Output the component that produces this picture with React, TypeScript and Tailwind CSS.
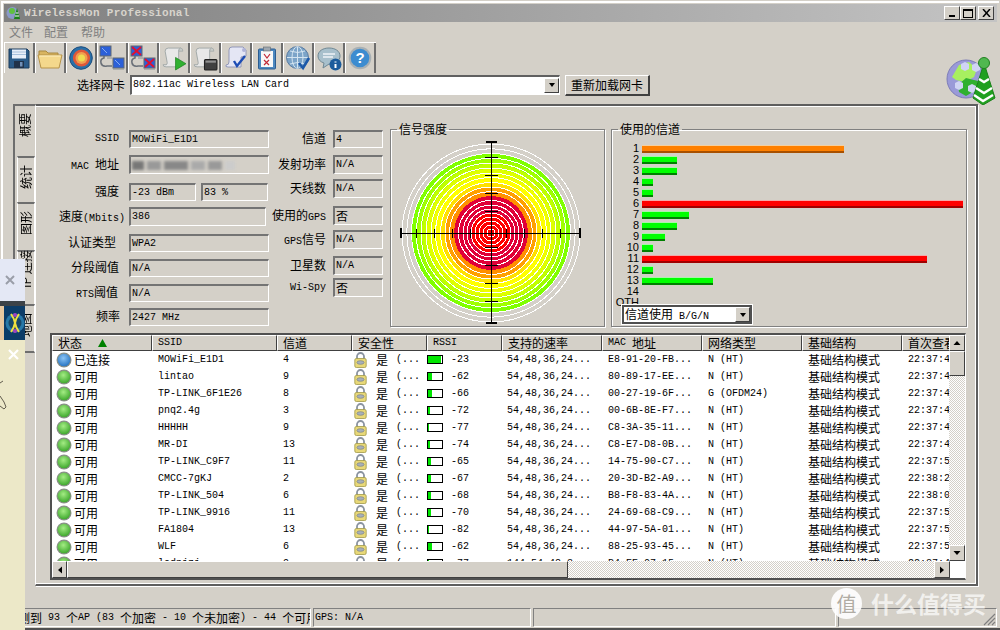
import React from "react";

const LATIN = "font-['Liberation_Mono','Noto_Sans_CJK_SC',monospace]";

function Mix({ text }: { text: string }) {
  const parts = text.split(/([\u4e00-\u9fff\uff08\uff09]+)/);
  return (
    <>
      {parts.map((p, i) =>
        /[\u4e00-\u9fff]/.test(p) ? (
          <span key={i} className="text-[12px] font-['Noto_Sans_CJK_SC',sans-serif]">{p}</span>
        ) : (
          <span key={i} className="text-[10px]">{p}</span>
        )
      )}
    </>
  );
}

function Field({ text, className = "" }: { text?: string; className?: string }) {
  return (
    <div className={`h-full flex items-center pl-[1px] whitespace-pre overflow-hidden border-t-2 border-l-2 border-t-[#747474] border-l-[#747474] border-b border-r border-b-white border-r-white ${className}`}>
      {text ? <Mix text={text} /> : null}
    </div>
  );
}

function Row({ label, className, labelClass = "", children }: { label: string; className: string; labelClass?: string; children: React.ReactNode }) {
  return (
    <div className={`flex items-center whitespace-pre ${className}`}>
      <div className={`text-right ${labelClass}`}><Mix text={label} /></div>
      {children}
    </div>
  );
}

function Bar({ w, color }: { w: number; color: "g" | "r" | "o" }) {
  const c =
    color === "g"
      ? "bg-[#00ff00] border-t-[#a8f5a8] border-b-[#008000]"
      : color === "r"
        ? "bg-[#ff0000] border-t-[#f5a8a8] border-b-[#a00000]"
        : "bg-[#ff8000] border-t-[#f5d0a0] border-b-[#a85000]";
  return <div className={`h-[8px] border-t border-b-2 ${c}`} style={{ width: w }} />;
}

function Radar() {
  const fills: [number, string][] = [
    [79, "#80ff00"],
    [74, "#a0ff00"],
    [69, "#c0ff00"],
    [64, "#e0ff00"],
    [59, "#f0ff00"],
    [55, "#ffff00"],
    [50.5, "#ffe000"],
    [46, "#ffa000"],
    [41.5, "#ff9000"],
    [37, "#e00038"],
    [20, "#ff0000"],
  ];
  const white = [89, 84.2, 79.5, 74.7, 70, 65, 60, 55.5, 50.5, 46, 41.5, 32.5, 28, 24, 20, 16, 12, 8, 4];
  const tx = [-75, -57, -39, -21, 15, 33, 51, 69];
  const ty = [-76, -58, -40, -22, 14, 32, 50, 68];
  return (
    <svg width="182" height="184" viewBox="-91 -92 182 184" shapeRendering="crispEdges" className="block">
      {fills.map(([r, c]) => (
        <circle key={r} r={r} fill={c} />
      ))}
      {white.map((r) => (
        <circle key={r} r={r} fill="none" stroke="#fff" strokeWidth="1" />
      ))}
      <path d="M-91 0.5H89M0.5 -92V90" stroke="#000" strokeWidth="1" />
      <path d="M-90 -5V5M89 -5V5" stroke="#000" strokeWidth="2" />
      <path d="M-5 -91H6M-5 90H6" stroke="#000" strokeWidth="2" />
      {tx.map((t) => (
        <path key={t} d={`M${t + 0.5} -4V5`} stroke="#000" />
      ))}
      {ty.map((t) => (
        <path key={t} d={`M-6 ${t + 0.5}H7`} stroke="#000" />
      ))}
    </svg>
  );
}

function StatusDot({ blue }: { blue?: boolean }) {
  const id = blue ? "dotB" : "dotG";
  return (
    <svg width="16" height="16" viewBox="0 0 16 16">
      <defs>
        <radialGradient id={id} cx="0.45" cy="0.35" r="0.7">
          <stop offset="0" stopColor={blue ? "#8cc4f4" : "#a4ec84"} />
          <stop offset="1" stopColor={blue ? "#2070c0" : "#38a428"} />
        </radialGradient>
      </defs>
      <circle cx="8" cy="8" r="7.5" fill="#8a9088" />
      <circle cx="8" cy="8" r="6.3" fill={`url(#${id})`} />
    </svg>
  );
}

function Lock() {
  return (
    <svg width="13" height="16" viewBox="0 0 13 16">
      <path d="M3 7V4.5a3.5 3.5 0 0 1 7 0V7" fill="none" stroke="#8a93a0" strokeWidth="1.8" />
      <rect x="0.8" y="6.5" width="11.4" height="9" rx="1.5" fill="#e8d878" stroke="#a09848" strokeWidth="0.8" />
      <ellipse cx="6.5" cy="10.5" rx="3.6" ry="1.8" fill="#a8b0b8" stroke="#707880" strokeWidth="0.6" />
    </svg>
  );
}

function Signal({ w }: { w: number }) {
  return (
    <div className="w-[16px] h-[9px] border border-black bg-white flex shrink-0">
      <div className="h-full bg-[#00e600]" style={{ width: w }} />
    </div>
  );
}

const rows = [
  ["已连接", "MOWiFi_E1D1", "4", "-23", 13, "E8-91-20-FB...", "N (HT)", "22:37:4"],
  ["可用", "lintao", "9", "-62", 4, "80-89-17-EE...", "N (HT)", "22:37:4"],
  ["可用", "TP-LINK_6F1E26", "8", "-66", 4, "00-27-19-6F...", "G (OFDM24)", "22:37:4"],
  ["可用", "pnq2.4g", "3", "-72", 2, "00-6B-8E-F7...", "N (HT)", "22:37:4"],
  ["可用", "HHHHH", "9", "-77", 1, "C8-3A-35-11...", "N (HT)", "22:37:4"],
  ["可用", "MR-DI", "13", "-74", 2, "C8-E7-D8-0B...", "N (HT)", "22:37:4"],
  ["可用", "TP-LINK_C9F7", "11", "-65", 3, "14-75-90-C7...", "N (HT)", "22:37:5"],
  ["可用", "CMCC-7gKJ", "2", "-67", 3, "20-3D-B2-A9...", "N (HT)", "22:38:2"],
  ["可用", "TP-LINK_504", "6", "-68", 3, "B8-F8-83-4A...", "N (HT)", "22:38:0"],
  ["可用", "TP-LINK_9916", "11", "-70", 3, "24-69-68-C9...", "N (HT)", "22:37:5"],
  ["可用", "FA1804", "13", "-82", 1, "44-97-5A-01...", "N (HT)", "22:37:5"],
  ["可用", "WLF", "6", "-62", 4, "88-25-93-45...", "N (HT)", "22:37:5"],
  ["可用", "lodnjzj", "9", "-77", 1, "B4-EE-07-15...", "N (HT)", "22:37:4"],
] as const;

const COLS = "grid grid-cols-[100px_125px_75px_75px_75px_100px_100px_100px_100px_48px]";

const heads = ["SSID", "信道", "安全性", "RSSI", "支持的速率", "MAC 地址", "网络类型", "基础结构", "首次查看"];

const bars: [string, number, "g" | "r" | "o"][] = [
  ["1", 202, "o"], ["2", 35, "g"], ["3", 35, "g"], ["4", 11, "g"], ["5", 11, "g"],
  ["6", 321, "r"], ["7", 47, "g"], ["8", 35, "g"], ["9", 23, "g"], ["10", 11, "g"],
  ["11", 285, "r"], ["12", 11, "g"], ["13", 71, "g"], ["14", 0, "g"], ["OTH", 0, "g"],
];

const RAISED = "border border-t-white border-l-white border-r-[#404040] border-b-[#404040] bg-[#d4d0c8]";
const CHECKER = "bg-[repeating-conic-gradient(#d4d0c8_0_25%,#ffffff_0_50%)] bg-[length:2px_2px]";

function Arrow({ d }: { d: string }) {
  return (
    <svg width="8" height="8" viewBox="0 0 8 8">
      <path d={d} fill="#000" />
    </svg>
  );
}

function Scroll({ base = "#e8e8e8", children }: { base?: string; children?: React.ReactNode }) {
  return (
    <svg width="25" height="25" viewBox="0 0 24 24">
      <path d="M3 5q0-3 3-3h12q-2 1-2 3v12q0 3-3 3H4q-3 0-3-2h3q1 0 1-2z" fill={base} stroke="#98a0a0" strokeWidth="0.8" />
      <path d="M16 5q0-3 2-3t2 3z" fill="#c8ccc8" stroke="#98a0a0" strokeWidth="0.6" />
      {children}
    </svg>
  );
}

function Monitors({ cross }: { cross?: boolean }) {
  const X = (x: number, y: number) => (
    <path d={`M${x} ${y}l9 8M${x + 9} ${y}l-9 8`} stroke="#e01030" strokeWidth="1.8" />
  );
  return (
    <svg width="26" height="26" viewBox="0 0 26 26">
      <rect x="1" y="1" width="11" height="10" fill="#2c60d8" stroke="#606870" />
      <rect x="14" y="13" width="11" height="10" fill="#2c60d8" stroke="#606870" />
      <path d="M5 11v2q-4 1-3 5t6 3h5" fill="none" stroke="#6a7078" strokeWidth="1.6" />
      <path d="M8 13h5M14 24h11" stroke="#888e90" strokeWidth="1.2" />
      <path d="M3 3l5 5M16 15l5 5" stroke="#88aef0" strokeWidth="1" />
      {cross ? X(2, 2) : null}
      {cross ? X(15, 14) : null}
    </svg>
  );
}

const icons: React.ReactNode[] = [
  <svg key="0" width="22" height="22" viewBox="0 0 22 22">
    <path d="M1 2h18l2 2v17H1z" fill="#2a5a88" stroke="#1c3c5c" />
    <rect x="4" y="2.5" width="14" height="9" fill="#e8eef8" />
    <path d="M4 5h14M4 7.500h14" stroke="#a8c0dc" />
    <rect x="6" y="14" width="10" height="7" fill="#20324a" />
    <rect x="12" y="15" width="2.5" height="4.5" fill="#7090b8" />
  </svg>,
  <svg key="1" width="26" height="22" viewBox="0 0 26 22">
    <path d="M2 4h7l2 2h10v4H2z" fill="#d8b460" stroke="#a88840" />
    <path d="M1 8h24l-3 13H4z" fill="#f4d88c" stroke="#b89448" />
    <path d="M2.500 9h21" stroke="#fff0c0" />
  </svg>,
  <svg key="2" width="24" height="24" viewBox="0 0 24 24">
    <circle cx="12" cy="12" r="11.3" fill="#2a70a8" stroke="#1c4c7c" />
    <circle cx="12.5" cy="12" r="8.6" fill="#e05838" />
    <circle cx="12.5" cy="12" r="6" fill="#f0a050" />
    <circle cx="12.5" cy="12" r="3.5" fill="#f0dc50" />
  </svg>,
  <Monitors key="3" />,
  <Monitors key="4" cross />,
  <Scroll key="5">
    <path d="M13 11l10 6-10 6z" fill="#30b030" stroke="#1c8020" strokeWidth="0.7" />
  </Scroll>,
  <Scroll key="6">
    <rect x="11" y="13" width="12" height="10" rx="1" fill="#404040" stroke="#202020" />
    <rect x="12" y="14" width="10" height="2" fill="#909090" />
  </Scroll>,
  <svg key="7" width="24" height="24" viewBox="0 0 24 24">
    <path d="M5 4q0-3 3-3h11l3 3v6l-5 1v10H4q-3 0-2-2 3 0 3-3z" fill="#e4e6f4" stroke="#8088b0" strokeWidth="0.8" />
    <circle cx="20" cy="4" r="2" fill="#b0b4d8" />
    <path d="M10 15l3 5 8-10" fill="none" stroke="#1c4cb4" strokeWidth="2.4" />
  </svg>,
  <svg key="8" width="20" height="24" viewBox="0 0 20 24">
    <rect x="1.5" y="3" width="17" height="20" rx="1" fill="#4c88c0" stroke="#2c5c90" />
    <rect x="4" y="5" width="12" height="16" fill="#f8f8f8" />
    <rect x="6.5" y="1" width="7" height="4" fill="#a0a8b0" stroke="#606870" strokeWidth="0.6" />
    <path d="M7 8l3 4 3-4M7 14l5 5M12 14l-5 5" fill="none" stroke="#c02838" strokeWidth="1.2" />
  </svg>,
  <svg key="9" width="25" height="25" viewBox="0 0 25 25">
    <circle cx="11.5" cy="11.5" r="11" fill="#7ca4c8" stroke="#5c7ca0" />
    <path d="M1 11.500h21M11.500 1v21M4 5q7.500 3 15 0M4 18q7.500-3 15 0" fill="none" stroke="#d4e4f0" />
    <ellipse cx="11.5" cy="11.5" rx="5.5" ry="11" fill="none" stroke="#d4e4f0" />
    <path d="M13 17l4 5 6-10" fill="none" stroke="#1c58a8" strokeWidth="2.6" />
  </svg>,
  <svg key="10" width="25" height="25" viewBox="0 0 25 25">
    <path d="M12 2c6 0 11 3 11 8s-5 8-11 8l-6 4 1-5q-6-2-6-7c0-5 5-8 11-8z" fill="#a8c0cc" stroke="#708894" />
    <path d="M6 8h12M6 11h10" stroke="#f0f4f8" strokeWidth="1.4" />
    <circle cx="18.5" cy="18.5" r="6" fill="#1c5c9c" />
    <path d="M18.500 15.500v1M18.500 18v4" stroke="#fff" strokeWidth="2" />
  </svg>,
  <svg key="11" width="24" height="24" viewBox="0 0 24 24">
    <circle cx="12" cy="12" r="11.3" fill="#a8b0b4" />
    <circle cx="12" cy="12" r="9.3" fill="#3c8cd0" />
    <text x="12" y="17" textAnchor="middle" fontFamily="Liberation Sans" fontWeight="700" fontSize="15" fill="#fff">?</text>
  </svg>,
];

export default function App() {
  return (
    <div className={`relative w-[1000px] h-[630px] overflow-hidden bg-[#d4d0c8] text-black ${LATIN} text-[10px] leading-none`}>
      <div className="flex flex-col h-full pt-[1px] pl-[1px] pr-[1px]">
        <div className="flex flex-col flex-1 min-h-0 border-t-2 border-l-2 border-white pt-[1px] pl-[1px] pr-[2px]">
          {/* title */}
          <div className="h-[18px] flex items-center bg-gradient-to-r from-[#808080] to-[#c4c4c4] shrink-0 pl-[2px] pr-[2px]">
            <svg width="16" height="16" viewBox="0 0 16 16">
              <circle cx="6.5" cy="8" r="6" fill="#8a9ac8" />
              <circle cx="6" cy="6" r="3" fill="#60c040" />
              <path d="M11 3l-3 11h6z" fill="#188018" />
              <path d="M9 11h4M9.700 8h2.800" stroke="#fff" />
            </svg>
            <span className="ml-[2px] mt-[1px] text-[11px] font-bold tracking-[0.3px] text-[#d8d4cc]">WirelessMon Professional</span>
            <div className="ml-auto flex items-center mr-[1px]">
              <div className={`w-[16px] h-[14px] flex items-end justify-center pb-[2px] ${RAISED}`}><div className="w-[6px] h-[2px] bg-black" /></div>
              <div className={`w-[16px] h-[14px] flex items-center justify-center ${RAISED}`}><div className="w-[10px] h-[9px] border border-t-2 border-black" /></div>
              <div className={`w-[16px] h-[14px] ml-[2px] flex items-center justify-center ${RAISED}`}>
                <svg width="9" height="8" viewBox="0 0 9 8"><path d="M1 0l7 8M8 0l-7 8" stroke="#000" strokeWidth="1.5" /></svg>
              </div>
            </div>
          </div>
          {/* menu */}
          <div className="h-[20px] flex items-center shrink-0 pl-[5px] text-[12px] text-[#808080] font-['Noto_Sans_CJK_SC',sans-serif]">
            <span>文件</span>
            <span className="ml-[11px]">配置</span>
            <span className="ml-[13px]">帮助</span>
          </div>
          {/* toolbar */}
          <div className="relative flex w-[372px] h-[31px] shrink-0 border-t border-white">
            {icons.map((ic, i) => (
              <div key={i} className="w-[31px] h-full flex items-center justify-center border-l border-l-white border-r-2 border-r-[#6e6e6e]">
                {ic}
              </div>
            ))}
          </div>
          {/* adapter row */}
          <div className="flex items-center h-[22px] mt-[1px] shrink-0 whitespace-pre">
            <span className="ml-[73px] text-[12px] font-['Noto_Sans_CJK_SC',sans-serif]">选择网卡</span>
            <div className="ml-[5px] -mt-[1px] w-[430px] h-[20px] flex items-center bg-white border-t-2 border-l-2 border-t-[#606060] border-l-[#606060] border-b border-r border-white">
              <span className="pl-[1px] flex-1">802.11ac Wireless LAN Card</span>
              <div className={`w-[15px] h-[15px] flex items-center justify-center ${RAISED}`}><Arrow d="M1 2h6L4 6z" /></div>
            </div>
            <div className={`ml-[5px] w-[85px] h-[21px] flex items-center justify-center text-[12px] font-['Noto_Sans_CJK_SC',sans-serif] border-r-2 border-b-2 ${RAISED}`}>重新加载网卡</div>
            <svg className="ml-auto -mr-[1px] -mt-[20px] -mb-[12px]" width="52" height="48" viewBox="0 0 52 48">
              <circle cx="20" cy="22" r="19" fill="#9a9ad8" />
              <circle cx="20" cy="22" r="19" fill="none" stroke="#7c7cb8" />
              <path d="M6 20l7-12 10-3 8 7-3 8-9 5-9-2z" fill="#a8f060" />
              <path d="M12 28l8-7 12 3-2 9-10 6-7-4z" fill="#30b030" />
              <path d="M19 5l4 2v5l-4 2-4-2V7zM30 6l4 2v5l-4 2-4-2V8zM13 24l4 2v5l-4 2-4-2v-5zM26 27l4 2v5l-4 2-4-2v-5z" fill="#d0d4f4" />
              <path d="M38 6L27 41l10 7 12-7z" fill="#20a020" stroke="#188018" />
              <path d="M33 22l5 3 5-3M30 31l8 5 8-5M28 38l9 6 10-6" fill="none" stroke="#fff" strokeWidth="2.4" />
              <circle cx="38" cy="6" r="5.5" fill="#50b850" stroke="#208020" />
            </svg>
          </div>
          {/* tab control */}
          <div className="flex ml-[9px] mt-[8px] w-[965px] h-[482px] shrink-0">
            <div className="w-[22px] shrink-0 flex flex-col items-end h-[249px] border-l-2 border-l-[#6e6e6e] text-[12px] font-['Noto_Sans_CJK_SC',sans-serif]">
              {[["概要", "h-[52px]"], ["统计", "h-[46px]"], ["图形", "h-[48px]"], ["IP 连接", "h-[54px]"], ["地图", "h-[49px]"]].map(([t, h], i) => (
                <div
                  key={t}
                  className={`${h} flex justify-center pt-[2px] border-t-2 border-t-[#6e6e6e] ${i === 0 ? "w-[20px]" : "w-[18px] border-l border-l-white"} ${i === 4 ? "border-b-2 border-b-[#6e6e6e]" : ""} ${i === 0 ? "" : "border-r border-r-white"}`}
                >
                  <span className="[writing-mode:vertical-rl] [text-orientation:sideways] rotate-180 h-[34px] text-center whitespace-pre">{t}</span>
                </div>
              ))}
            </div>
            <div className="flex-1 flex flex-col border-t-2 border-t-[#5e5e5e] border-b-2 border-b-[#5e5e5e] border-r-2 border-r-[#5e5e5e] border-l border-l-white shadow-[inset_0_1px_0_#fff,inset_-1px_-1px_0_#fff,1px_1px_0_#fff]">
              {/* upper area */}
              <div className="flex h-[225px] shrink-0">
                <div className="w-[234px] shrink-0 pt-[24px] text-[10px]">
                  <Row label="SSID" className="h-[18px]" labelClass="w-[83px] mr-[10px]"><Field text="MOWiFi_E1D1" className="w-[140px]" /></Row>
                  <Row label="MAC 地址" className="h-[19px] mt-[7px]" labelClass="w-[83px] mr-[10px]">
                    <div className="w-[140px] h-full relative overflow-hidden border-t-2 border-l-2 border-t-[#747474] border-l-[#747474] border-b border-r border-b-white border-r-white">
                      <div className="flex gap-[3px] h-[9px] mt-[4px] ml-[1px] blur-[1.5px]">
                        <div className="w-[12px] bg-[#777]" /><div className="w-[14px] bg-[#999]" /><div className="w-[24px] bg-[#888]" /><div className="w-[14px] bg-[#aaa]" /><div className="w-[14px] bg-[#999]" /><div className="w-[10px] bg-[#ccc]" />
                      </div>
                    </div>
                  </Row>
                  <Row label="强度" className="h-[18px] mt-[9px]" labelClass="w-[83px] mr-[10px]">
                    <Field text="-23 dBm" className="w-[67px]" />
                    <Field text="83 %" className="w-[67px] ml-[5px]" />
                  </Row>
                  <Row label="速度(Mbits)" className="h-[19px] mt-[6px]" labelClass="w-[89px] mr-[4px]"><Field text="386" className="w-[137px]" /></Row>
                  <Row label="认证类型" className="h-[18px] mt-[8px]" labelClass="w-[80px] mr-[13px]"><Field text="WPA2" className="w-[140px]" /></Row>
                  <Row label="分段阈值" className="h-[18px] mt-[7px]" labelClass="w-[83px] mr-[10px]"><Field text="N/A" className="w-[140px]" /></Row>
                  <Row label="RTS阈值" className="h-[18px] mt-[7px]" labelClass="w-[82px] mr-[11px]"><Field text="N/A" className="w-[140px]" /></Row>
                  <Row label="频率" className="h-[18px] mt-[6px]" labelClass="w-[84px] mr-[9px]"><Field text="2427 MHz" className="w-[140px]" /></Row>
                </div>
                <div className="w-[114px] shrink-0 pt-[24px] text-[10px]">
                  <Row label="信道" className="h-[18px]" labelClass="w-[56px] mr-[7px]"><Field text="4" className="w-[50px]" /></Row>
                  <Row label="发射功率" className="h-[19px] mt-[7px]" labelClass="w-[56px] mr-[7px]"><Field text="N/A" className="w-[50px]" /></Row>
                  <Row label="天线数" className="h-[19px] mt-[5px]" labelClass="w-[56px] mr-[7px]"><Field text="N/A" className="w-[50px]" /></Row>
                  <Row label="使用的GPS" className="h-[19px] mt-[8px]" labelClass="w-[56px] mr-[7px]"><Field text="否" className="w-[50px]" /></Row>
                  <Row label="GPS信号" className="h-[19px] mt-[5px]" labelClass="w-[56px] mr-[7px]"><Field text="N/A" className="w-[50px]" /></Row>
                  <Row label="卫星数" className="h-[19px] mt-[7px]" labelClass="w-[56px] mr-[7px]"><Field text="N/A" className="w-[50px]" /></Row>
                  <Row label="Wi-Spy" className="h-[19px] mt-[3px]" labelClass="w-[56px] mr-[7px]"><Field text="否" className="w-[50px]" /></Row>
                </div>
                <fieldset className="ml-[6px] mt-[16px] h-[205px] w-[215px] border border-[#808080] shadow-[inset_1px_1px_0_#fff,1px_1px_0_#fff]">
                  <legend className="ml-[6px] px-[2px] text-[12px] leading-[14px] font-['Noto_Sans_CJK_SC',sans-serif]">信号强度</legend>
                  <div className="pl-[9px] pt-[5px]"><Radar /></div>
                </fieldset>
                <fieldset className="ml-[6px] mt-[16px] h-[205px] w-[356px] border border-[#808080] shadow-[inset_1px_1px_0_#fff,1px_1px_0_#fff]">
                  <legend className="ml-[6px] px-[2px] text-[12px] leading-[14px] font-['Noto_Sans_CJK_SC',sans-serif]">使用的信道</legend>
                  <div className="pt-[7px] font-['Liberation_Sans',sans-serif] text-[11px]">
                    {bars.map(([l, w, c]) => (
                      <div key={l} className="h-[11px] flex items-center">
                        <div className="w-[27px] text-right mr-[3px]">{l}</div>
                        {w > 0 ? <Bar w={w} color={c} /> : null}
                      </div>
                    ))}
                  </div>
                  <div className="ml-[10px] -mt-[3px] w-[130px] h-[19px] relative flex items-center bg-white border-t-2 border-l-2 border-t-[#505050] border-l-[#505050] border-b-2 border-r-2 border-b-[#505050] border-r-[#505050] shadow-[0_0_0_1px_#fff]">
                    <span className="pl-[1px] flex-1 whitespace-pre"><Mix text="信道使用 B/G/N" /></span>
                    <div className={`w-[15px] h-[15px] flex items-center justify-center ${RAISED}`}><Arrow d="M1 2h6L4 6z" /></div>
                  </div>
                </fieldset>
              </div>
              {/* list */}
              <div className="ml-[14px] mt-[2px] w-[916px] h-[247px] flex flex-col border-t-2 border-l-2 border-t-[#505050] border-l-[#505050] border-b-2 border-b-[#505050] border-r border-r-white bg-white">
                <div className="flex flex-1 min-h-0">
                  <div className="w-[898px] flex flex-col overflow-hidden">
                    <div className={`${COLS} h-[16px] shrink-0`}>
                      <div className={`${RAISED} flex items-center pl-[5px] text-[12px] font-['Noto_Sans_CJK_SC',sans-serif]`}>
                        <span>状态</span>
                        <svg className="ml-[16px]" width="9" height="8" viewBox="0 0 9 8"><path d="M4.5 0L9 8H0z" fill="#008000" /></svg>
                      </div>
                      {heads.map((h) => (
                        <div key={h} className={`${RAISED} flex items-center pl-[5px] overflow-hidden whitespace-pre`}><Mix text={h} /></div>
                      ))}
                    </div>
                    {rows.map((r) => (
                      <div key={r[1]} className={`${COLS} h-[17px] shrink-0 items-center whitespace-pre`}>
                        <div className="flex items-center pl-[4px] gap-[2px] text-[12px] font-['Noto_Sans_CJK_SC',sans-serif]">
                          <StatusDot blue={r[0] === "已连接"} />
                          <span>{r[0]}</span>
                        </div>
                        <div className="pl-[6px]">{r[1]}</div>
                        <div className="pl-[6px]">{r[2]}</div>
                        <div className="flex items-center pl-[2px]">
                          <Lock />
                          <span className="ml-[9px] text-[12px] font-['Noto_Sans_CJK_SC',sans-serif]">是</span>
                          <span className="ml-[8px]">(...</span>
                        </div>
                        <div className="flex items-center">
                          <Signal w={r[4]} />
                          <span className="ml-[8px]">{r[3]}</span>
                        </div>
                        <div className="pl-[5px]">{r[1] === "lodnjzj" ? "144,54,48,3..." : "54,48,36,24..."}</div>
                        <div className="pl-[6px]">{r[5]}</div>
                        <div className="pl-[6px]">{r[6]}</div>
                        <div className="pl-[6px] text-[12px] font-['Noto_Sans_CJK_SC',sans-serif]">基础结构模式</div>
                        <div className="pl-[6px] overflow-hidden">{r[7]}</div>
                      </div>
                    ))}
                  </div>
                  <div className="w-[16px] flex flex-col shrink-0">
                    <div className={`h-[16px] flex items-center justify-center ${RAISED}`}><Arrow d="M4 2l3.500 4h-7z" /></div>
                    <div className={`h-[25px] ${RAISED}`} />
                    <div className={`flex-1 ${CHECKER}`} />
                    <div className={`h-[16px] flex items-center justify-center ${RAISED}`}><Arrow d="M.5 2h7L4 6z" /></div>
                  </div>
                </div>
                <div className="flex h-[17px] shrink-0 w-[898px]">
                  <div className={`w-[15px] flex items-center justify-center ${RAISED}`}><Arrow d="M6 .5v7L2 4z" /></div>
                  <div className={`w-[501px] ${RAISED}`} />
                  <div className={`flex-1 ${CHECKER}`} />
                  <div className={`w-[16px] flex items-center justify-center ${RAISED}`}><Arrow d="M2 .5v7L6 4z" /></div>
                </div>
              </div>
            </div>
          </div>
          {/* status bar */}
          <div className="mt-auto flex h-[19px] shrink-0 mb-[1px] whitespace-pre">
            {[
              ["检测到 93 个AP (83 个加密 - 10 个未加密) - 44 个可用", "w-[307px]"],
              ["GPS: N/A", "w-[218px] ml-[2px]"],
              ["", "w-[303px] ml-[2px]"],
              ["", "flex-1 ml-[2px]"],
            ].map(([t, w], i) => (
              <div key={i} className={`${w} h-full flex items-center pl-[1px] overflow-hidden border-t border-l border-t-[#808080] border-l-[#808080] border-r border-r-white border-b border-b-white`}>
                {t ? <Mix text={t} /> : null}
                {i === 3 ? (
                  <svg className="ml-auto mt-auto" width="13" height="13" viewBox="0 0 13 13">
                    <path d="M12 1L1 12M12 5L5 12M12 9L9 12" stroke="#808080" strokeWidth="1.2" />
                  </svg>
                ) : null}
              </div>
            ))}
          </div>
        </div>
        <div className="h-[2px] bg-[#505050] shrink-0 -mx-[1px]" />
      </div>

      {/* desktop pieces that lie over the window */}
      <div className="absolute left-0 top-[259px] w-[25px] h-[371px] flex flex-col">
        <div className="h-[42px] bg-[#e4e8f5] flex items-center justify-center pr-[6px]">
          <svg width="10" height="10" viewBox="0 0 10 10"><path d="M1 1l8 8M9 1l-8 8" stroke="#9a9ea8" strokeWidth="2" /></svg>
        </div>
        <div className="h-[5px] bg-[#3c4248]" />
        <div className="h-[34px] flex">
          <div className="w-[4px] bg-[#e8c8a0]" />
          <div className="flex-1 bg-[#0c3c68] flex items-center justify-center">
            <svg width="20" height="32" viewBox="0 0 20 32">
              <circle cx="10" cy="16" r="9.500" fill="#2878a8" />
              <circle cx="10" cy="16" r="6.500" fill="#184868" />
              <path d="M6 7q3 4 4 9t4 9M14 7q-3 4-4 9t-4 9" fill="none" stroke="#f0e040" strokeWidth="2" />
              <circle cx="10" cy="8" r="2" fill="#a040c0" />
              <circle cx="10" cy="24" r="2" fill="#a040c0" />
            </svg>
          </div>
        </div>
        <div className="flex-1 bg-[#ece8c8] pt-[9px] pl-[8px]">
          <svg width="11" height="11" viewBox="0 0 11 11"><path d="M1 1l9 9M10 1l-9 9" stroke="#fff" strokeWidth="2.2" /></svg>
          <svg className="-ml-[8px] mt-[10px]" width="8" height="46" viewBox="0 0 8 46"><path d="M0 13l3-2M0 26l4 6 2 5-2 2-4-3" fill="none" stroke="#504c40" strokeWidth="0.9" /></svg>
        </div>
      </div>

      {/* watermark */}
      <div className="absolute left-[831px] top-[588px] flex items-center font-['Noto_Sans_CJK_SC',sans-serif] text-white/70">
        <div className="w-[31px] h-[31px] rounded-full bg-white/90 flex items-center justify-center text-[20px] text-[#b0aca4]">值</div>
        <span className="ml-[9px] text-[23px] leading-none font-bold">什么值得买</span>
      </div>
    </div>
  );
}
